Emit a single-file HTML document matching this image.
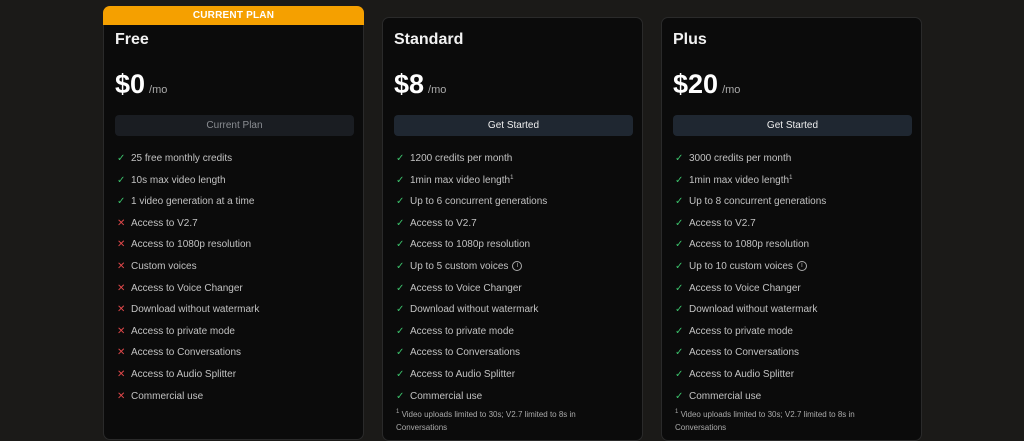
<!DOCTYPE html>
<html><head><meta charset="utf-8"><style>
*{box-sizing:border-box;margin:0;padding:0}
html,body{width:1024px;height:441px;overflow:hidden}
body{background:#1b1a18;font-family:"Liberation Sans",sans-serif;position:relative;color:#c9c9c9}
.card{position:absolute;width:261px;background:#0b0b0b;border:1px solid #2a2a2a;border-radius:7px}
.hdr{position:absolute;left:103px;top:6px;width:261px;height:19px;background:#f5a000;border-radius:7px 7px 0 0;color:#fff;font-size:10px;font-weight:bold;text-align:center;line-height:19px;letter-spacing:.2px}
.col{position:absolute;top:0;width:260px}
.t{position:absolute;left:11px;font-size:16px;font-weight:bold;color:#f2f2f2;white-space:nowrap}
.p{position:absolute;left:11px;font-size:27px;font-weight:bold;color:#fff;white-space:nowrap}
.p span{font-size:11px;font-weight:normal;color:#aaa;margin-left:4px}
.b{position:absolute;left:11px;width:239px;height:21px;border-radius:4px;background:#1f2731;color:#eee;font-size:10px;text-align:center;line-height:21px}
.b.cur{background:#1a1d22;color:#8a8d92}
ul{position:absolute;left:11px;width:245px;list-style:none}
li{height:21.6px;line-height:21.6px;font-size:10px;color:#c2c2c2;position:relative;padding-left:16px;white-space:nowrap}
li:before{position:absolute;left:2px;top:0;font-size:10px}
li.y:before{content:"✓";color:#3bbf6a}
li.n:before{content:"✕";color:#e0484a}
sup{font-size:6px;line-height:0;vertical-align:4px}
.i{display:inline-block;width:10px;height:10px;border:1px solid #aaa;border-radius:50%;font-size:7px;line-height:8px;text-align:center;vertical-align:middle;margin-left:4px;color:#aaa}
.fn{position:absolute;left:13px;font-size:8px;color:#aaa;line-height:13px;width:205px}
</style></head><body>
<div class="card" style="left:103px;top:6px;height:434px"></div>
<div class="hdr">CURRENT PLAN</div>
<div class="card" style="left:382px;top:17px;height:424px"></div>
<div class="card" style="left:661px;top:17px;height:424px"></div>

<div class="col" style="left:104px">
<div class="t" style="top:31px">Free</div>
<div class="p" style="top:69px">$0<span>/mo</span></div>
<div class="b cur" style="top:115px">Current Plan</div>
<ul style="top:148px">
<li class="y">25 free monthly credits</li><li class="y">10s max video length</li><li class="y">1 video generation at a time</li>
<li class="n">Access to V2.7</li><li class="n">Access to 1080p resolution</li><li class="n">Custom voices</li><li class="n">Access to Voice Changer</li><li class="n">Download without watermark</li><li class="n">Access to private mode</li><li class="n">Access to Conversations</li><li class="n">Access to Audio Splitter</li><li class="n">Commercial use</li></ul>
</div>

<div class="col" style="left:383px">
<div class="t" style="top:31px">Standard</div>
<div class="p" style="top:69px">$8<span>/mo</span></div>
<div class="b" style="top:115px">Get Started</div>
<ul style="top:148px">
<li class="y">1200 credits per month</li><li class="y">1min max video length<sup>1</sup></li><li class="y">Up to 6 concurrent generations</li>
<li class="y">Access to V2.7</li><li class="y">Access to 1080p resolution</li><li class="y">Up to 5 custom voices<span class="i">i</span></li><li class="y">Access to Voice Changer</li><li class="y">Download without watermark</li><li class="y">Access to private mode</li><li class="y">Access to Conversations</li><li class="y">Access to Audio Splitter</li><li class="y">Commercial use</li></ul>
<div class="fn" style="top:408px"><sup>1</sup> Video uploads limited to 30s; V2.7 limited to 8s in Conversations</div>
</div>

<div class="col" style="left:662px">
<div class="t" style="top:31px">Plus</div>
<div class="p" style="top:69px">$20<span>/mo</span></div>
<div class="b" style="top:115px">Get Started</div>
<ul style="top:148px">
<li class="y">3000 credits per month</li><li class="y">1min max video length<sup>1</sup></li><li class="y">Up to 8 concurrent generations</li>
<li class="y">Access to V2.7</li><li class="y">Access to 1080p resolution</li><li class="y">Up to 10 custom voices<span class="i">i</span></li><li class="y">Access to Voice Changer</li><li class="y">Download without watermark</li><li class="y">Access to private mode</li><li class="y">Access to Conversations</li><li class="y">Access to Audio Splitter</li><li class="y">Commercial use</li></ul>
<div class="fn" style="top:408px"><sup>1</sup> Video uploads limited to 30s; V2.7 limited to 8s in Conversations</div>
</div>
</body></html>
